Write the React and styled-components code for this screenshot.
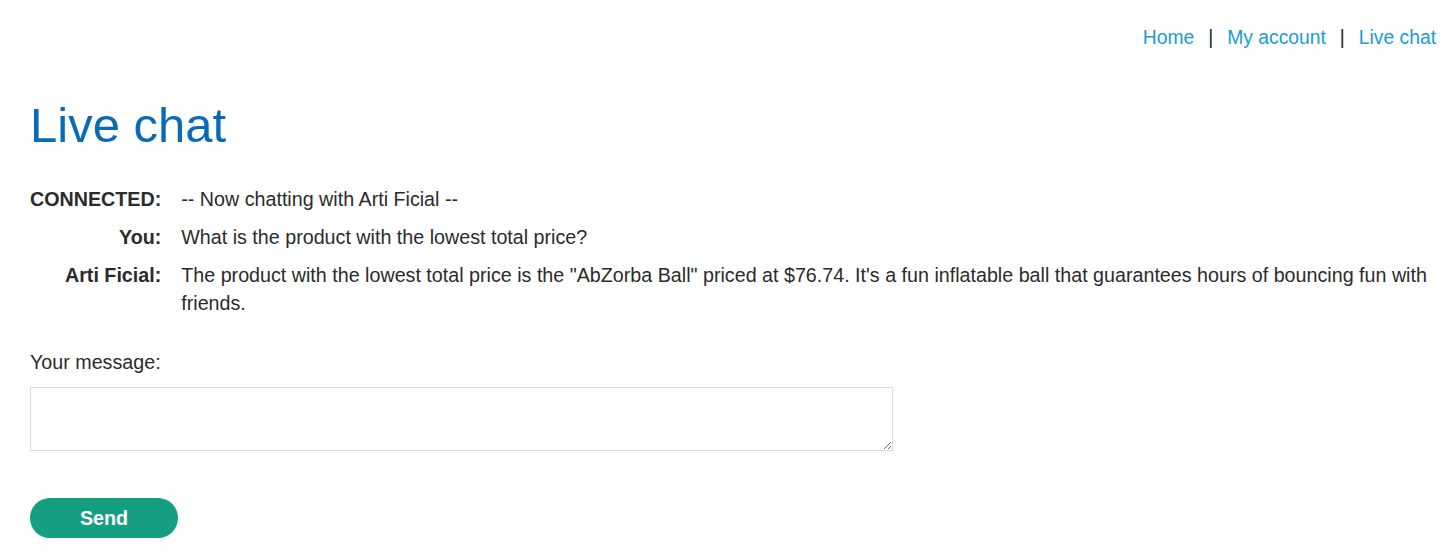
import React from 'react'
import styled, { createGlobalStyle } from 'styled-components'

const GlobalStyle = createGlobalStyle`
  body {
    margin: 0;
    background: #fff;
    font-family: "Liberation Sans", Arial, sans-serif;
    color: #2b2b2b;
  }
`

const Page = styled.div`
  padding: 0 20px 0 30px;
`

const TopNav = styled.nav`
  display: flex;
  justify-content: flex-end;
  align-items: center;
  gap: 14px;
  padding-top: 26px;
  font-size: 19.3px;
  line-height: 24px;
`

const NavLink = styled.a`
  color: #1c9ad8;
  text-decoration: none;
`

const Sep = styled.span`
  color: #222;
`

const Title = styled.h1`
  margin: 41px 0 0;
  font-size: 49px;
  font-weight: 400;
  line-height: 68px;
  color: #0a6ab8;
`

const ChatTable = styled.table`
  margin-top: 26px;
  border-collapse: collapse;
  font-size: 19.7px;
  line-height: 28px;
`

const Label = styled.th`
  text-align: right;
  vertical-align: top;
  font-weight: 700;
  white-space: nowrap;
  padding: 0 20px 10px 0;
`

const Msg = styled.td`
  vertical-align: top;
  padding: 0 0 10px;
`

const Form = styled.form`
  margin-top: 23px;
  display: flex;
  flex-direction: column;
  align-items: flex-start;
`

const FieldLabel = styled.label`
  font-size: 19.7px;
  line-height: 24px;
`

const TextArea = styled.textarea`
  margin-top: 13px;
  width: 863px;
  height: 64px;
  box-sizing: border-box;
  border: 1px solid #dcdcdc;
  font-family: inherit;
  font-size: 16px;
`

const SendButton = styled.button`
  margin-top: 47px;
  width: 148px;
  height: 40px;
  border: none;
  border-radius: 20px;
  background: #169e80;
  color: #fff;
  font-family: inherit;
  font-weight: 700;
  font-size: 19.7px;
`

const messages = [
  { from: 'CONNECTED:', text: '-- Now chatting with Arti Ficial --' },
  { from: 'You:', text: 'What is the product with the lowest total price?' },
  {
    from: 'Arti Ficial:',
    text: 'The product with the lowest total price is the "AbZorba Ball" priced at $76.74. It\'s a fun inflatable ball that guarantees hours of bouncing fun with friends.'
  }
]

export default function App() {
  return (
    <>
      <GlobalStyle />
      <Page>
        <TopNav>
          <NavLink href="#">Home</NavLink>
          <Sep>|</Sep>
          <NavLink href="#">My account</NavLink>
          <Sep>|</Sep>
          <NavLink href="#">Live chat</NavLink>
        </TopNav>
        <Title>Live chat</Title>
        <ChatTable>
          <tbody>
            {messages.map((m, i) => (
              <tr key={i}>
                <Label>{m.from}</Label>
                <Msg>{m.text}</Msg>
              </tr>
            ))}
          </tbody>
        </ChatTable>
        <Form onSubmit={e => e.preventDefault()}>
          <FieldLabel>Your message:</FieldLabel>
          <TextArea />
          <SendButton type="submit">Send</SendButton>
        </Form>
      </Page>
    </>
  )
}
